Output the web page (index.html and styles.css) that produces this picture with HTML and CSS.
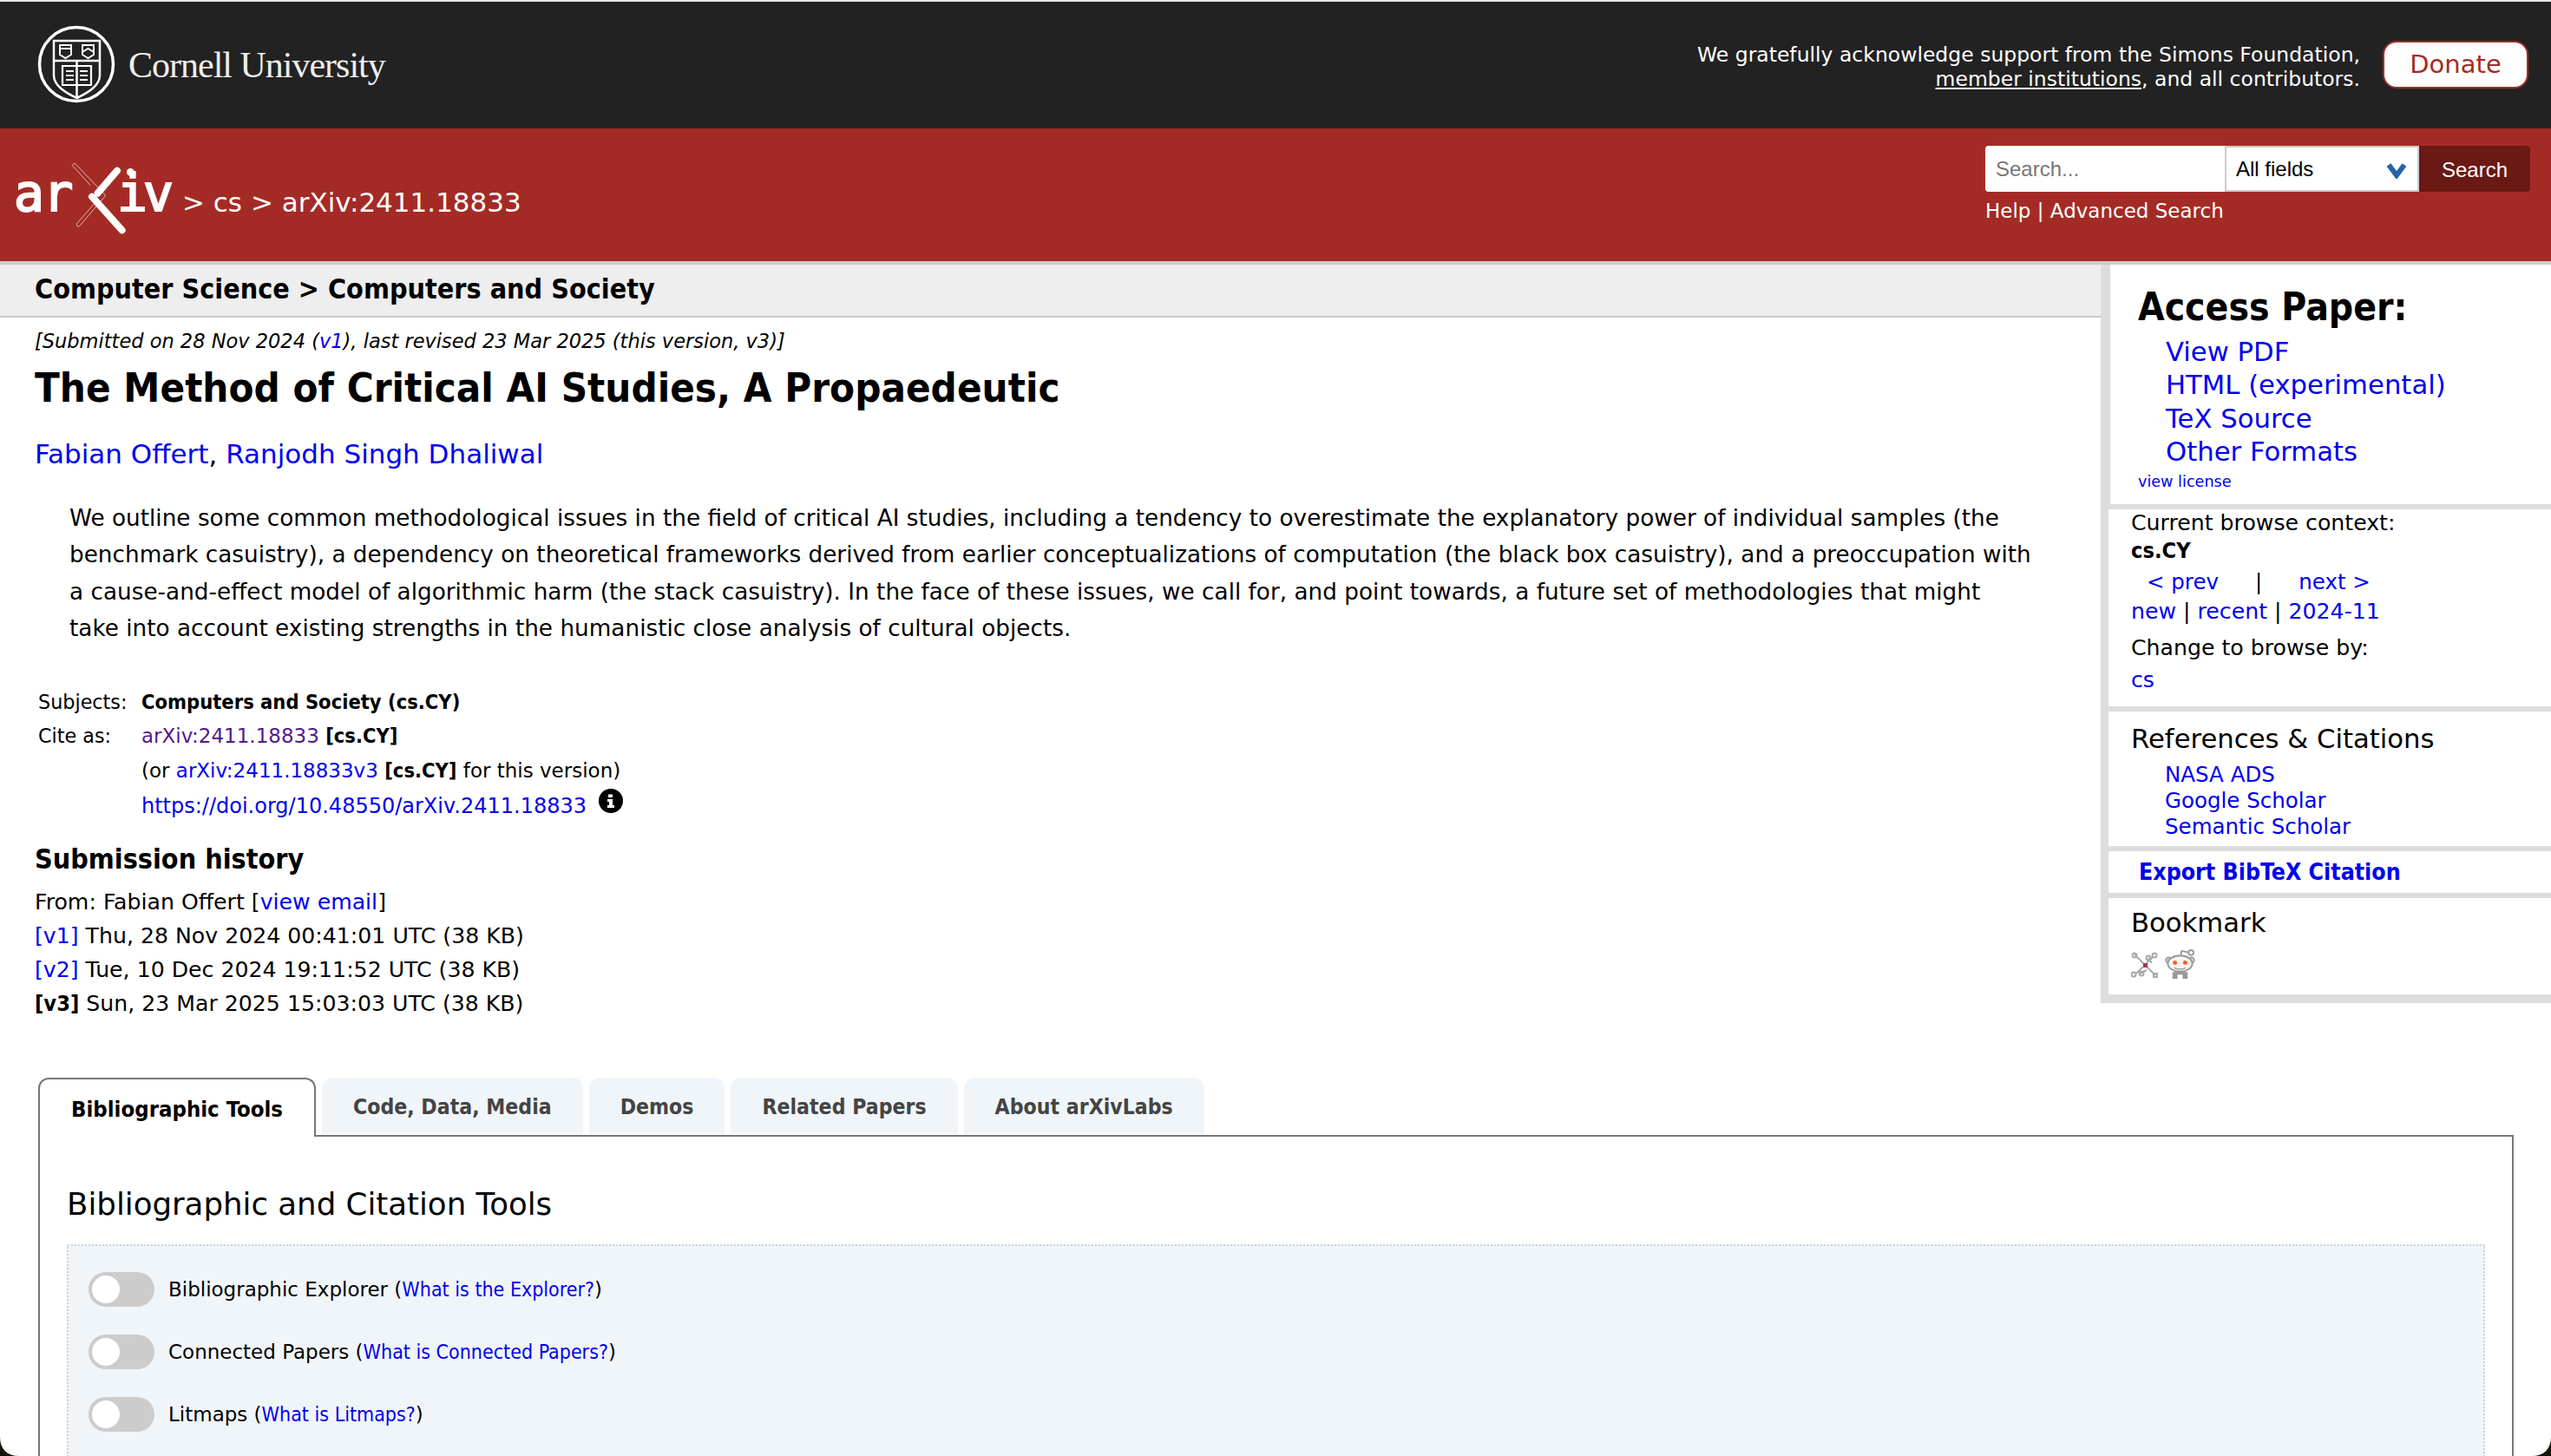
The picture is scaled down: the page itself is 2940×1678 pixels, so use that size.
FILE: index.html
```html
<!DOCTYPE html>
<html lang="en">
<head>
    <meta charset="UTF-8">
    <title>The Method of Critical AI Studies, A Propaedeutic</title>
    <link rel="stylesheet" href="styles.css">
</head>
<body>
<div class="page">

    <div class="cu-banner">
        <div class="cu-logo">
            <svg class="cu-seal" width="90" height="90" viewBox="0 0 90 90" fill="none" stroke="#fff">
                <circle cx="45" cy="45" r="42.5" stroke-width="3.5"/>
                <path d="M19 18H72V58C72 70 58 78 45.500 84C33 78 19 70 19 58Z" stroke-width="2.5"/>
                <path d="M19 41H72M45.500 41V84" stroke-width="2.5"/>
                <path d="M26 23H39V34L32.500 38L26 34ZM52 23H65V34L58.500 38L52 34Z" stroke-width="2"/>
                <path d="M26 27H39M52 31L58.500 27L65 31" stroke-width="2"/>
                <path d="M29 47H62V69H29Z" stroke-width="2.2"/>
                <path d="M33 53H42M33 58H42M33 63H42M49 53H58M49 58H58M49 63H58" stroke-width="2.2"/>
            </svg>
            <span class="cu-name">Cornell University</span>
        </div>
        <div class="support">
            <p>We gratefully acknowledge support from the Simons Foundation,<br><a href="#">member institutions</a>, and all contributors.</p>
            <a class="donate" href="#">Donate</a>
        </div>
    </div>

    <div class="red-header">
        <div class="crumbs">
            <svg class="arxiv-logo" width="200" height="110" viewBox="0 0 600 330">
                <g class="arxiv-letters">
                    <text x="48" y="190" textLength="205">ar</text>
                    <text x="405" y="190" textLength="195">iv</text>
                </g>
                <circle cx="451" cy="55" r="13" fill="#fff"/>
                <path d="M405 50L338 128" stroke="#fff" stroke-width="24" stroke-linecap="round"/>
                <path d="M318 140L422 256" stroke="#fff" stroke-width="24" stroke-linecap="round"/>
                <path d="M250 32C254 24 260 24 264 30L360 130C364 135 364 138 360 142L278 238C272 246 262 244 266 232L330 160M250 32L312 100" fill="none" stroke="#fff" stroke-width="2"/>
            </svg>
            <span class="crumb-text">&gt; cs &gt; arXiv:2411.18833</span>
        </div>
        <div class="search-block">
            <form class="search-row">
                <input class="search-input" type="text" placeholder="Search...">
                <div class="search-field">
                    All fields
                    <svg class="chevron" width="24" height="18" viewBox="0 0 24 18"><path d="M3 2L12 14L21 2" fill="none" stroke="#2563a8" stroke-width="6"/></svg>
                </div>
                <button class="search-btn" type="button">Search</button>
            </form>
            <div class="search-help"><a href="#">Help</a> | <a href="#">Advanced Search</a></div>
        </div>
    </div>

    <div class="columns">
        <div class="main">
            <div class="subject-bar">Computer Science &gt; Computers and Society</div>
            <div class="paper">
                <div class="dateline">[Submitted on 28 Nov 2024 (<a href="#">v1</a>), last revised 23 Mar 2025 (this version, v3)]</div>
                <h1 class="title">The Method of Critical AI Studies, A Propaedeutic</h1>
                <div class="authors"><a href="#">Fabian Offert</a>, <a href="#">Ranjodh Singh Dhaliwal</a></div>
                <blockquote class="abstract">We outline some common methodological issues in the field of critical AI studies, including a tendency to overestimate the explanatory power of individual samples (the benchmark casuistry), a dependency on theoretical frameworks derived from earlier conceptualizations of computation (the black box casuistry), and a preoccupation with a cause-and-effect model of algorithmic harm (the stack casuistry). In the face of these issues, we call for, and point towards, a future set of methodologies that might take into account existing strengths in the humanistic close analysis of cultural objects.</blockquote>
                <div class="meta">
                    <div class="meta-label">Subjects:</div>
                    <div><b>Computers and Society (cs.CY)</b></div>
                    <div class="meta-label">Cite as:</div>
                    <div><a class="visited" href="#">arXiv:2411.18833</a> <b>[cs.CY]</b></div>
                    <div></div>
                    <div>(or <a href="#">arXiv:2411.18833v3</a> <b>[cs.CY]</b> for this version)</div>
                    <div></div>
                    <div class="doi-row">
                        <a href="#">https://doi.org/10.48550/arXiv.2411.18833</a>
                        <svg class="info" width="28" height="28" viewBox="0 0 28 28"><circle cx="14" cy="14" r="14" fill="#000"/><path d="M11 6.500H16V10H11ZM10 12H16V19H18V22H10V19H12V15H10Z" fill="#fff"/></svg>
                    </div>
                </div>
                <h2 class="history-head">Submission history</h2>
                <div class="history">
                    <div>From: Fabian Offert [<a href="#">view email</a>]</div>
                    <div><a href="#">[v1]</a> Thu, 28 Nov 2024 00:41:01 UTC (38 KB)</div>
                    <div><a href="#">[v2]</a> Tue, 10 Dec 2024 19:11:52 UTC (38 KB)</div>
                    <div><b>[v3]</b> Sun, 23 Mar 2025 15:03:03 UTC (38 KB)</div>
                </div>
            </div>
        </div>

        <div class="sidebar">
            <div class="panel access">
                <h2>Access Paper:</h2>
                <ul>
                    <li><a href="#">View PDF</a></li>
                    <li><a href="#">HTML (experimental)</a></li>
                    <li><a href="#">TeX Source</a></li>
                    <li><a href="#">Other Formats</a></li>
                </ul>
                <a class="license" href="#">view license</a>
            </div>
            <div class="panel browse">
                <div>Current browse context:</div>
                <div class="context">cs.CY</div>
                <div class="prevnext"><a href="#">&lt; prev</a><span>|</span><a href="#">next &gt;</a></div>
                <div class="listing"><a href="#">new</a> | <a href="#">recent</a> | <a href="#">2024-11</a></div>
                <div class="change">Change to browse by:</div>
                <div class="change-link"><a href="#">cs</a></div>
            </div>
            <div class="panel refs">
                <h3>References &amp; Citations</h3>
                <ul>
                    <li><a href="#">NASA ADS</a></li>
                    <li><a href="#">Google Scholar</a></li>
                    <li><a href="#">Semantic Scholar</a></li>
                </ul>
            </div>
            <div class="panel export"><a href="#">Export BibTeX Citation</a></div>
            <div class="panel bookmark">
                <h3>Bookmark</h3>
                <div class="bookmark-icons">
                    <svg width="32" height="32" viewBox="0 0 32 32" fill="none" stroke="#aaa" stroke-width="2">
                        <path d="M4 4L28 28M26 6L18 14M14 18L6 26M18 22L10 26M20 8L24 14"/>
                        <circle cx="4" cy="5" r="2.500"/><circle cx="27" cy="5" r="2.500"/><circle cx="20" cy="8" r="2.500"/><circle cx="3" cy="27" r="2.500"/><circle cx="12" cy="26" r="2.500"/><rect x="26" y="26" width="4" height="4"/>
                        <rect x="14" y="14" width="5" height="5" fill="#a8325a" stroke="none"/>
                    </svg>
                    <svg width="35" height="35" viewBox="0 0 36 36">
                        <path d="M18 11L20 3L29 5" fill="none" stroke="#999" stroke-width="2"/>
                        <circle cx="31" cy="5" r="3" fill="#fff" stroke="#999" stroke-width="2"/>
                        <circle cx="4.500" cy="14" r="3.500" fill="#ccc" stroke="#999" stroke-width="1.500"/>
                        <circle cx="31.500" cy="14" r="3.500" fill="#ccc" stroke="#999" stroke-width="1.500"/>
                        <ellipse cx="18" cy="18" rx="14.500" ry="9.500" fill="#f4f4f4" stroke="#999" stroke-width="2"/>
                        <circle cx="12" cy="17" r="2.500" fill="#ff5a1f"/><circle cx="24" cy="17" r="2.500" fill="#ff5a1f"/>
                        <path d="M11 23C15 25 21 25 25 23" fill="none" stroke="#999" stroke-width="1.500"/>
                        <path d="M9 28H15V36H9ZM21 28H27V36H21ZM12 27H24V31H12Z" fill="#999"/>
                    </svg>
                </div>
            </div>
        </div>
    </div>

    <div class="labs">
        <div class="tabs">
            <div class="tab active">Bibliographic Tools</div>
            <div class="tab">Code, Data, Media</div>
            <div class="tab">Demos</div>
            <div class="tab">Related Papers</div>
            <div class="tab">About arXivLabs</div>
        </div>
        <div class="tab-panel">
            <h2>Bibliographic and Citation Tools</h2>
            <div class="tool-box">
                <div class="tool"><span class="toggle"></span><span>Bibliographic Explorer (<a href="#">What is the Explorer?</a>)</span></div>
                <div class="tool"><span class="toggle"></span><span>Connected Papers (<a href="#">What is Connected Papers?</a>)</span></div>
                <div class="tool"><span class="toggle"></span><span>Litmaps (<a href="#">What is Litmaps?</a>)</span></div>
            </div>
        </div>
    </div>

    <span class="corner corner-left"></span>
    <span class="corner corner-right"></span>
</div>
</body>
</html>
```

FILE: styles.css
```css
* {
    box-sizing: border-box;
}
body {
    margin: 0;
    background-color: #fff;
    color: #000;
    font-family: "DejaVu Sans", sans-serif;
}
a {
    color: #0000ee;
    text-decoration: none;
}
b, h1, .access h2, .history-head, .subject-bar, .context, .export, .tab {
    font-family: "DejaVu Sans Condensed", "DejaVu Sans", sans-serif;
    font-weight: bold;
}
.page {
    position: relative;
    height: 1678px;
    overflow: hidden;
    border-top: 2px solid #e6e6e6;
}

/* top banner */
.cu-banner {
    height: 146px;
    background-color: #222;
    display: flex;
    justify-content: space-between;
    align-items: flex-start;
    padding: 27px 26px 0 43px;
}
.cu-logo {
    display: flex;
    align-items: center;
    gap: 15px;
    color: #fff;
}
.cu-name {
    font-family: "Liberation Serif", serif;
    font-size: 42px;
    letter-spacing: -1px;
    color: #eee;
    padding-top: 2px;
}
.support {
    display: flex;
    gap: 26px;
    padding-top: 18px;
    color: #fff;
    font-size: 23.500px;
    line-height: 28px;
    text-align: right;
}
.support p {
    margin: 0;
    padding-top: 2px;
}
.support p a {
    color: #fff;
    text-decoration: underline;
}
.donate {
    width: 168px;
    height: 55px;
    background-color: #fff;
    border: 2px solid #a42b25;
    border-radius: 16px;
    color: #a42b25;
    font-size: 29px;
    line-height: 50px;
    text-align: center;
}

/* red header */
.red-header {
    height: 153px;
    background-color: #a42b25;
    display: flex;
    justify-content: space-between;
    padding: 20px 24px 0 0;
    color: #fff;
}
.crumbs {
    display: flex;
    align-items: flex-start;
    padding-top: 12px;
    gap: 10px;
}
.arxiv-letters text {
    font-family: "DejaVu Sans Mono", monospace;
    font-size: 174px;
    fill: #fff;
    stroke: #fff;
    stroke-width: 6px;
}
.crumb-text {
    font-size: 31px;
    margin-top: 35px;
}
.search-row {
    display: flex;
    height: 53px;
    margin: 0;
}
.search-input {
    width: 276px;
    border: 0;
    border-radius: 4px 0 0 4px;
    padding: 0 12px;
    font-family: "Liberation Sans", sans-serif;
    font-size: 24px;
    outline: none;
}
.search-input::placeholder {
    color: #777;
}
.search-field {
    position: relative;
    width: 224px;
    background-color: #fff;
    border: 2px solid #ccc;
    padding: 0 11px;
    color: #000;
    font-family: "Liberation Sans", sans-serif;
    font-size: 24px;
    line-height: 49px;
}
.chevron {
    position: absolute;
    right: 12px;
    top: 18px;
}
.search-btn {
    width: 128px;
    background-color: #6b1914;
    border: 0;
    border-radius: 0 4px 4px 0;
    color: #fff;
    font-family: "Liberation Sans", sans-serif;
    font-size: 24px;
    padding-top: 4px;
}
.search-help {
    margin-top: 4px;
    font-size: 23px;
    line-height: 36px;
}
.search-help a {
    color: #fff;
}

/* page columns */
.columns {
    display: flex;
    border-top: 4px solid #ccc;
}
.main {
    width: 2421px;
}
.subject-bar {
    height: 61px;
    background-color: #eee;
    border-bottom: 2px solid #ccc;
    padding-left: 40px;
    font-size: 32px;
    line-height: 56px;
}
.paper {
    padding: 0 80px 0 40px;
}
.dateline {
    margin-top: 12px;
    font-size: 22.500px;
    font-style: italic;
    line-height: 30px;
}
.title {
    margin: 8px 0 0;
    font-size: 47px;
    line-height: 62px;
}
.authors {
    margin-top: 25px;
    font-size: 31px;
    line-height: 40px;
}
.abstract {
    margin: 33px 0 0 40px;
    font-size: 26.300px;
    line-height: 42.400px;
}
.meta {
    display: grid;
    grid-template-columns: 119px 1fr;
    grid-auto-rows: 39.500px;
    margin: 44px 0 0 4px;
    font-size: 23px;
    line-height: 39px;
}
.meta b {
    font-size: 23.500px;
}
.meta-label {
    font-size: 22.300px;
}
.visited {
    color: #551a8b;
}
.doi-row {
    display: flex;
    align-items: flex-start;
    gap: 14px;
    font-size: 24px;
    padding-top: 2px;
}
.info {
    margin-top: -1px;
}
.history-head {
    margin: 22px 0 0;
    font-size: 32px;
    line-height: 40px;
}
.history {
    margin-top: 10px;
    font-size: 25.200px;
    line-height: 39px;
}

/* sidebar */
.sidebar {
    width: 519px;
    height: 851px;
    background-color: #ddd;
    padding: 0 0 10px 9px;
}
.panel {
    background-color: #fff;
    margin-bottom: 6px;
}
.panel:last-child {
    margin-bottom: 0;
}
.access {
    height: 276px;
    margin-left: 2px;
    padding: 21px 0 0 32px;
}
.access h2 {
    margin: 0 0 5px;
    font-size: 44px;
    line-height: 56px;
}
.access ul, .refs ul {
    list-style: none;
    margin: 0;
    padding: 0 0 0 32px;
}
.access li {
    font-size: 30.700px;
    line-height: 38.300px;
}
.license {
    display: block;
    margin-top: 3px;
    font-size: 17.600px;
    line-height: 24px;
}
.browse {
    height: 227px;
    padding: 0 0 0 26px;
    font-size: 25.200px;
    line-height: 32px;
}
.prevnext {
    display: flex;
    margin-top: 3px;
    padding-left: 18px;
    gap: 42px;
    font-size: 24.500px;
    line-height: 34px;
}
.listing {
    line-height: 34px;
}
.change {
    margin-top: 9px;
}
.change-link {
    margin-top: 5px;
}
.refs {
    height: 155px;
    padding: 12px 0 0 26px;
}
.refs h3, .bookmark h3 {
    margin: 0;
    font-size: 30.700px;
    font-weight: normal;
    line-height: 40px;
}
.refs ul {
    margin-top: 6px;
    padding-left: 39px;
}
.refs li {
    font-size: 24.500px;
    line-height: 30px;
}
.export {
    height: 48px;
    padding-left: 35px;
    font-size: 26.500px;
    line-height: 47px;
}
.bookmark {
    height: 111px;
    padding: 9px 0 0 26px;
}
.bookmark-icons {
    display: flex;
    align-items: flex-end;
    gap: 7px;
    margin-top: 9px;
}

/* labs tabs */
.labs {
    margin: 66px 43px 0 44px;
}
.tabs {
    display: flex;
    gap: 7px;
    height: 68px;
}
.tab {
    height: 65px;
    background-color: #f0f5f9;
    border-radius: 12px 12px 0 0;
    padding: 0 36px;
    color: #444;
    font-size: 24.600px;
    line-height: 67px;
}
.tab.active {
    position: relative;
    height: 68px;
    background-color: #fff;
    border: 2px solid #777;
    border-bottom: 0;
    color: #000;
    font-size: 25.500px;
    line-height: 68px;
    z-index: 1;
}
.tab-panel {
    height: 500px;
    border: 2px solid #777;
    margin-top: -2px;
    padding: 0 31px;
}
.tab-panel h2 {
    margin: 56px 0 0;
    font-size: 35.600px;
    font-weight: normal;
    line-height: 44px;
}
.tool-box {
    height: 400px;
    margin-top: 24px;
    background-color: #f0f5f9;
    border: 2px dotted #c8d4dc;
    padding: 30px 23px;
}
.tool {
    display: flex;
    align-items: center;
    gap: 16px;
    height: 40px;
    margin-bottom: 32px;
    font-size: 23px;
}
.tool a {
    font-family: "DejaVu Sans Condensed", "DejaVu Sans", sans-serif;
}
.toggle {
    position: relative;
    width: 76px;
    height: 40px;
    background-color: #ccc;
    border-radius: 20px;
}
.toggle::before {
    content: "";
    position: absolute;
    left: 4px;
    top: 4px;
    width: 32px;
    height: 32px;
    background-color: #fff;
    border-radius: 50%;
}

/* rounded window corners */
.corner {
    position: absolute;
    bottom: 0;
    width: 22px;
    height: 22px;
    background-color: #14180a;
}
.corner-left {
    left: 0;
    clip-path: path("M0 0C0 14 8 22 22 22H0Z");
}
.corner-right {
    right: 0;
    clip-path: path("M22 0C22 14 14 22 0 22H22Z");
}
```
